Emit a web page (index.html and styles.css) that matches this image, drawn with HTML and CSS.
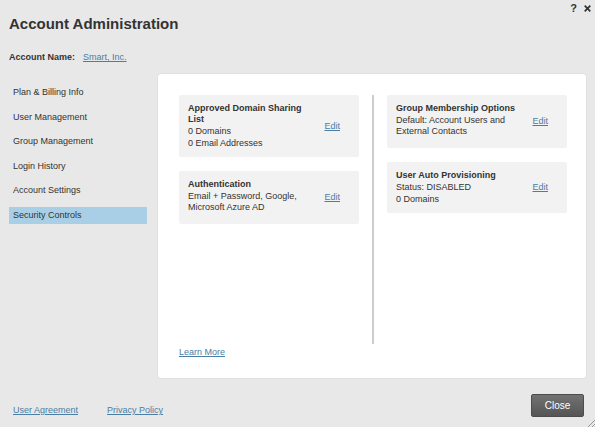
FILE: index.html
```html
<!DOCTYPE html>
<html lang="en">
<head>
<meta charset="utf-8">
<meta name="viewport" content="width=device-width, initial-scale=1">
<title>Account Administration</title>
<link rel="stylesheet" href="styles.css">
</head>
<body>
<div class="dialog">
  <header class="header">
    <h1 class="title">Account Administration</h1>
    <div class="tools">
      <button class="tool" type="button" aria-label="Help">?</button>
      <button class="tool" type="button" aria-label="Close window">
        <svg width="7" height="7" viewBox="0 0 7 7" aria-hidden="true"><path d="M.7.7l5.6 5.6M6.3.7L.7 6.3" stroke="currentColor" stroke-width="1.7"/></svg>
      </button>
    </div>
  </header>
  <p class="account"><strong>Account Name:</strong> <a href="#">Smart, Inc.</a></p>
  <div class="body">
    <nav class="nav">
      <a class="nav-item" href="#">Plan &amp; Billing Info</a>
      <a class="nav-item" href="#">User Management</a>
      <a class="nav-item" href="#">Group Management</a>
      <a class="nav-item" href="#">Login History</a>
      <a class="nav-item" href="#">Account Settings</a>
      <a class="nav-item nav-item-active" href="#" aria-current="page">Security Controls</a>
    </nav>
    <main class="panel">
      <div class="columns">
        <div class="column">
          <section class="card">
            <div class="card-text">
              <h2>Approved Domain Sharing List</h2>
              <p>0 Domains</p>
              <p>0 Email Addresses</p>
            </div>
            <a href="#">Edit</a>
          </section>
          <section class="card card-summary">
            <div class="card-text">
              <h2>Authentication</h2>
              <p>Email + Password, Google, Microsoft Azure AD</p>
            </div>
            <a href="#">Edit</a>
          </section>
        </div>
        <div class="divider"></div>
        <div class="column">
          <section class="card card-summary">
            <div class="card-text">
              <h2>Group Membership Options</h2>
              <p>Default: Account Users and External Contacts</p>
            </div>
            <a href="#">Edit</a>
          </section>
          <section class="card">
            <div class="card-text">
              <h2>User Auto Provisioning</h2>
              <p>Status: DISABLED</p>
              <p>0 Domains</p>
            </div>
            <a href="#">Edit</a>
          </section>
        </div>
      </div>
      <a class="learn-more" href="#">Learn More</a>
    </main>
  </div>
  <footer class="footer">
    <div class="legal">
      <a href="#">User Agreement</a>
      <a href="#">Privacy Policy</a>
    </div>
    <button class="close" type="button">Close</button>
  </footer>
  <svg class="grip" width="8" height="8" viewBox="0 0 8 8" aria-hidden="true"><path d="M0 8L8 0M4 8L8 4" stroke="#999" fill="none"/></svg>
</div>
</body>
</html>
```
FILE: styles.css
```css
* {
  box-sizing: border-box;
}

body {
  margin: 0;
  background: #e8e8e8;
  color: #333;
  font-family: "Liberation Sans", Arial, sans-serif;
  font-size: 9px;
  line-height: 11px;
}

h1, h2, p {
  margin: 0;
}

a {
  color: #4a7ea5;
}

.dialog {
  position: relative;
  display: flex;
  flex-direction: column;
  min-height: 100vh;
  padding: 0 8px 0 9px;
}

.header {
  display: flex;
  justify-content: space-between;
  align-items: flex-start;
}

.title {
  padding-top: 15px;
  font-size: 15px;
  line-height: 18px;
}

.tools {
  display: flex;
  gap: 7px;
  margin-right: -4px;
  padding-top: 2px;
}

.tool {
  display: flex;
  align-items: center;
  height: 12px;
  padding: 0;
  border: 0;
  background: none;
  color: #333;
  font: bold 11px/12px "Liberation Sans", Arial, sans-serif;
}

.account {
  display: flex;
  gap: 8px;
  margin-top: 19px;
}

.body {
  display: flex;
  flex: 1;
  gap: 10px;
  margin-top: 10px;
}

.nav {
  display: flex;
  flex: 0 0 138px;
  flex-direction: column;
  align-self: flex-start;
  justify-content: space-between;
  min-height: 140px;
  margin-top: 11px;
}

.nav-item {
  padding: 0 4px;
  color: #333;
  line-height: 17px;
  text-decoration: none;
}

.nav-item-active {
  background: #a9cfe7;
}

.panel {
  flex: 1;
  padding: 21px 19px 20px 21px;
  border: 1px solid #e0e0e0;
  border-radius: 4px;
  background: #fff;
}

.columns {
  display: grid;
  grid-template-columns: 1fr 2px 1fr;
  gap: 13px;
  min-height: 249px;
}

.column {
  display: flex;
  flex-direction: column;
  gap: 14px;
}

.divider {
  background: #ccc;
}

.card {
  display: flex;
  align-items: center;
  justify-content: space-between;
  gap: 8px;
  padding: 8px 19px 8px 9px;
  border-radius: 2px;
  background: #f2f2f2;
}

.card-summary .card-text {
  padding-bottom: 3px;
}

.card-text {
  flex: 0 1 125px;
}

.card h2 {
  font-size: 9px;
  line-height: 11px;
}

.card p {
  margin-top: 1px;
}

.learn-more {
  display: inline-block;
  margin-top: 3px;
}

.footer {
  display: flex;
  justify-content: space-between;
  padding: 15px 3px 11px 4px;
}

.legal {
  display: flex;
  gap: 29px;
  padding-top: 11px;
}

.close {
  width: 53px;
  height: 23px;
  padding: 0;
  border: 1px solid #4c4c4c;
  border-radius: 2px;
  background: linear-gradient(#727272, #555);
  color: #fff;
  font: 10px/12px "Liberation Sans", Arial, sans-serif;
}

.grip {
  position: absolute;
  right: 0;
  bottom: 0;
}
```
